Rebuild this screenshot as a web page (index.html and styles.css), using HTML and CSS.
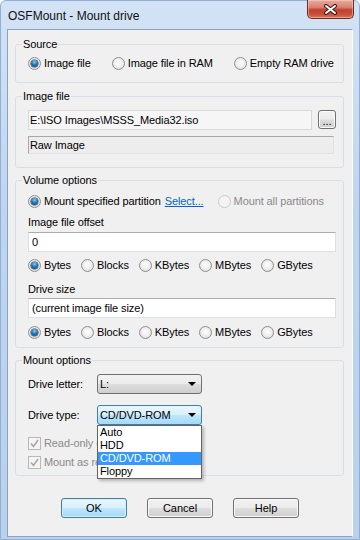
FILE: index.html
```html
<!DOCTYPE html>
<html lang="en">

<head>
    <meta charset="UTF-8">
    <meta name="viewport" content="width=device-width, initial-scale=1.0">
    <title>OSFMount - Mount drive</title>
    <link rel="stylesheet" href="styles.css">
</head>

<body>
    <div class="window">
        <!-- Title bar -->
        <div class="titlebar">
            <span class="title">OSFMount - Mount drive</span>
            <button class="close-btn">
                <svg width="15" height="11" viewBox="0 0 15 11">
                    <path d="M3 2 L12 9 M12 2 L3 9" stroke="#3b1510" stroke-width="4" stroke-linecap="round" />
                    <path d="M3 2 L12 9 M12 2 L3 9" stroke="#ffffff" stroke-width="2" stroke-linecap="round" />
                </svg>
            </button>
        </div>

        <div class="client">
            <!-- Source -->
            <div class="group group-source">
                <div class="group-title">Source</div>
                <div class="opt-row source-row">
                    <label class="opt"><span class="radio on"></span>Image file</label>
                    <label class="opt"><span class="radio"></span>Image file in RAM</label>
                    <label class="opt"><span class="radio"></span>Empty RAM drive</label>
                </div>
            </div>

            <!-- Image file -->
            <div class="group group-image">
                <div class="group-title">Image file</div>
                <div class="file-row">
                    <div class="edit edit-readonly">E:\ISO Images\MSSS_Media32.iso</div>
                    <button class="btn browse-btn">...</button>
                </div>
                <div class="static-field">Raw Image</div>
            </div>

            <!-- Volume options -->
            <div class="group group-volume">
                <div class="group-title">Volume options</div>
                <div class="opt-row partition-row">
                    <label class="opt"><span class="radio on"></span>Mount specified partition</label>
                    <a href="#" class="link">Select...</a>
                    <label class="opt disabled"><span class="radio"></span>Mount all partitions</label>
                </div>
                <div class="field-label offset-label">Image file offset</div>
                <div class="edit edit-offset">0</div>
                <div class="opt-row unit-row unit-row-offset">
                    <label class="opt"><span class="radio on"></span>Bytes</label>
                    <label class="opt"><span class="radio"></span>Blocks</label>
                    <label class="opt"><span class="radio"></span>KBytes</label>
                    <label class="opt"><span class="radio"></span>MBytes</label>
                    <label class="opt"><span class="radio"></span>GBytes</label>
                </div>
                <div class="field-label size-label">Drive size</div>
                <div class="edit edit-size">(current image file size)</div>
                <div class="opt-row unit-row unit-row-size">
                    <label class="opt"><span class="radio on"></span>Bytes</label>
                    <label class="opt"><span class="radio"></span>Blocks</label>
                    <label class="opt"><span class="radio"></span>KBytes</label>
                    <label class="opt"><span class="radio"></span>MBytes</label>
                    <label class="opt"><span class="radio"></span>GBytes</label>
                </div>
            </div>

            <!-- Mount options -->
            <div class="group group-mount">
                <div class="group-title">Mount options</div>
                <div class="combo-row letter-row">
                    <span class="combo-label">Drive letter:</span>
                    <div class="combo">L:</div>
                </div>
                <div class="combo-row type-row">
                    <span class="combo-label">Drive type:</span>
                    <div class="combo focused">CD/DVD-ROM
                        <ul class="dropdown">
                            <li>Auto</li>
                            <li>HDD</li>
                            <li class="selected">CD/DVD-ROM</li>
                            <li>Floppy</li>
                        </ul>
                    </div>
                </div>
                <!-- the open list hides the rest of these two labels -->
                <label class="check-row readonly-row disabled">
                    <span class="check">
                        <svg width="11" height="11" viewBox="0 0 11 11">
                            <path d="M2 5.5 L4.5 8.5 L9 2" fill="none" stroke="#a8a8a8" stroke-width="1.6" />
                        </svg>
                    </span><span class="check-text">Read-only d</span>
                </label>
                <label class="check-row removable-row disabled">
                    <span class="check">
                        <svg width="11" height="11" viewBox="0 0 11 11">
                            <path d="M2 5.5 L4.5 8.5 L9 2" fill="none" stroke="#a8a8a8" stroke-width="1.6" />
                        </svg>
                    </span><span class="check-text">Mount as re</span>
                </label>
            </div>

            <!-- Dialog buttons -->
            <div class="buttons">
                <button class="btn dlg-btn default">OK</button>
                <button class="btn dlg-btn">Cancel</button>
                <button class="btn dlg-btn">Help</button>
            </div>
        </div>
    </div>
</body>

</html>
```

FILE: styles.css
```css
* {
    box-sizing: border-box;
    margin: 0;
    padding: 0;
}

body {
    font-family: "Liberation Sans", Arial, sans-serif;
    font-size: 11px;
    letter-spacing: -0.1px;
    color: #000;
    background: #fff;
}

/* Window frame */
.window {
    width: 360px;
    height: 540px;
    display: flex;
    flex-direction: column;
    padding: 0 6px 2px 6px;
    border: 1px solid #8fb0d6;
    border-radius: 6px 6px 0 0;
    background: linear-gradient(#d3e3f5, #bed5ee 40%, #b9d1ea);
}

.titlebar {
    height: 28px;
    display: flex;
    align-items: center;
    justify-content: space-between;
}

.title {
    font-size: 12px;
    letter-spacing: 0;
    padding-left: 1px;
    padding-top: 1px;
    color: #111;
}

.close-btn {
    align-self: flex-start;
    width: 47px;
    height: 19px;
    margin-top: -1px;
    margin-right: -1px;
    border: 1px solid #6e2a21;
    border-top: none;
    border-radius: 0 0 5px 5px;
    background: linear-gradient(#e9ab9d 0%, #d88374 40%, #c2402c 55%, #c7503b 80%, #d9775d 100%);
    box-shadow: inset 0 0 0 1px rgba(255, 220, 210, 0.45);
    display: flex;
    align-items: center;
    justify-content: center;
}

/* Dialog client area */
.client {
    flex: 1;
    display: flex;
    flex-direction: column;
    background: #f0f0f0;
    border: 1px solid #8ea3bb;
    border-right-color: #fdfdfd;
    padding-top: 14px;
}

/* Group boxes */
.group {
    margin: 0 8px 0 7px;
    padding: 0 7px 0 12px;
    border: 1px solid #d5dfe5;
    border-radius: 3px;
}

.group-title {
    width: fit-content;
    margin: -7px 0 0 -6px;
    padding: 0 1px;
    line-height: 13px;
    background: #f0f0f0;
}

.group + .group {
    margin-top: 12px;
}

.group-source {
    padding-bottom: 11px;
}

.group-image {
    margin-top: 13px !important;
    padding-bottom: 13px;
}

.group-volume {
    padding-bottom: 7px;
}

.group-mount {
    padding-bottom: 6px;
}

/* Radio rows */
.opt-row {
    display: flex;
    align-items: center;
    height: 16px;
}

.source-row {
    margin-top: 4px;
    gap: 21px;
}

.partition-row {
    margin-top: 6px;
}

.unit-row {
    gap: 10px;
}

.unit-row-offset {
    margin-top: 5px;
}

.unit-row-size {
    margin-top: 6px;
}

.opt {
    display: flex;
    align-items: center;
    gap: 3px;
    white-space: nowrap;
}

.opt.disabled {
    color: #8a8a8a;
    margin-left: 14px;
}

.radio {
    position: relative;
    flex: none;
    width: 13px;
    height: 13px;
    border-radius: 50%;
    border: 1px solid #8e8f8f;
    background: radial-gradient(circle at 50% 45%, #ffffff 0%, #ececec 55%, #cfcfcf 100%);
}

.radio.on::after {
    content: "";
    position: absolute;
    top: 2px;
    left: 2px;
    width: 7px;
    height: 7px;
    border-radius: 50%;
    background: radial-gradient(circle at 50% 30%, #8fcdf0 0%, #2677b0 45%, #0c3f6a 100%);
    box-shadow: 0 0 0 0.5px #173f60;
}

.opt.disabled .radio {
    border-color: #c9c9c9;
    background: #f4f4f4;
}

.link {
    color: #0066cc;
    margin-left: 4px;
}

/* Edit fields */
.field-label {
    line-height: 13px;
}

.offset-label {
    margin-top: 7px;
}

.size-label {
    margin-top: 10px;
}

.edit {
    height: 20px;
    line-height: 18px;
    padding: 0 3px;
    background: #fff;
    border: 1px solid #dbdfe6;
    border-top-color: #abadb3;
    white-space: nowrap;
}

.edit-offset {
    margin-top: 3px;
}

.edit-size {
    margin-top: 2px;
}

.file-row {
    display: flex;
    gap: 6px;
    margin-top: 7px;
}

.edit-readonly {
    flex: 1;
    padding: 0 1px;
    background: #f6f6f6;
    border-color: #d9d9d9;
}

.static-field {
    height: 18px;
    line-height: 16px;
    margin-top: 6px;
    margin-right: 2px;
    padding: 0 1px;
    background: #ededed;
    border: 1px solid #a8a8a8;
    border-right-color: #e2e2e2;
    border-bottom-color: #e2e2e2;
}

/* Buttons */
.btn {
    font-family: inherit;
    font-size: 11px;
    color: #000;
    border: 1px solid #707070;
    border-radius: 3px;
    background: linear-gradient(#f2f2f2 0%, #ebebeb 48%, #dddddd 52%, #cfcfcf 100%);
    box-shadow: inset 0 0 0 1px #fbfbfb;
}

.browse-btn {
    width: 18px;
    height: 19px;
    line-height: 20px;
    padding: 0;
}

.buttons {
    display: flex;
    justify-content: center;
    gap: 20px;
    margin-top: 22px;
}

.dlg-btn {
    width: 66px;
    height: 20px;
}

.dlg-btn.default {
    border-color: #3c7fb1;
    background: linear-gradient(#eaf6fd 0%, #d9f0fc 48%, #bee6fd 52%, #a7d9f5 100%);
    box-shadow: inset 0 0 0 1px #d8eefb;
}

/* Combo boxes */
.combo-row {
    display: flex;
    align-items: center;
}

.letter-row {
    margin-top: 7px;
}

.type-row {
    margin-top: 11px;
}

.combo-label {
    width: 69px;
}

.combo {
    position: relative;
    width: 105px;
    height: 20px;
    line-height: 18px;
    padding-left: 2px;
    border: 1px solid #707070;
    border-radius: 3px;
    background: linear-gradient(#f2f2f2 0%, #ebebeb 48%, #dddddd 52%, #cfcfcf 100%);
}

.combo::after {
    content: "";
    position: absolute;
    right: 5px;
    top: 7px;
    border-left: 4px solid transparent;
    border-right: 4px solid transparent;
    border-top: 4px solid #000;
}

.combo.focused {
    border-color: #3c7fb1;
    background: linear-gradient(#eaf6fd 0%, #d9f0fc 48%, #bee6fd 52%, #a7d9f5 100%);
}

/* Open drop-down list */
.dropdown {
    position: absolute;
    top: 19px;
    left: -1px;
    width: 105px;
    list-style: none;
    background: #fff;
    border: 1px solid #646464;
    box-shadow: 2px 2px 3px rgba(0, 0, 0, 0.25);
    z-index: 10;
}

.dropdown li {
    height: 13px;
    line-height: 13px;
    padding-left: 2px;
}

.dropdown li.selected {
    background: #3399ff;
    color: #fff;
}

/* Check boxes */
.check-row {
    display: flex;
    align-items: center;
    gap: 3px;
    width: 69px;
    height: 14px;
    white-space: nowrap;
    overflow: hidden;
}

.check-row.disabled {
    color: #8a8a8a;
}

.readonly-row {
    margin-top: 11px;
}

.removable-row {
    margin-top: 5px;
}

.check {
    width: 13px;
    height: 13px;
    flex: none;
    border: 1px solid #b8b8b8;
    background: #f4f4f4;
    display: flex;
    align-items: center;
    justify-content: center;
}
```
